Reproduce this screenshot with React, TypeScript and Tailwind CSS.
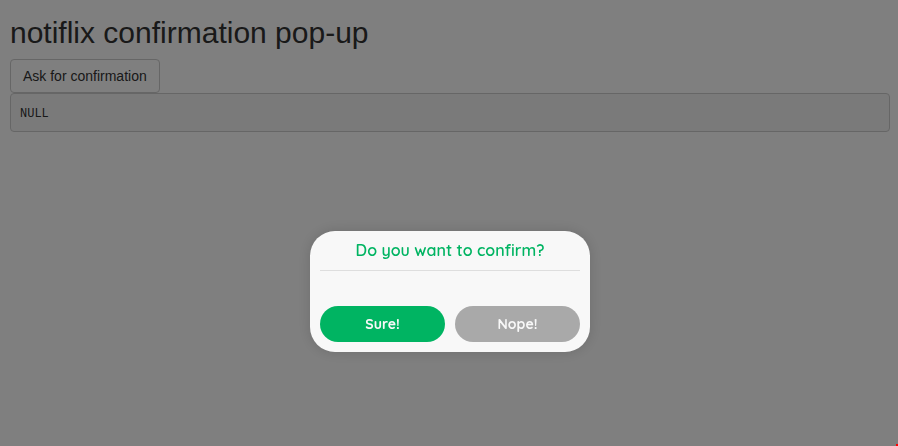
export default function App() {
  return (
    <div className="min-h-screen bg-white font-['Liberation_Sans',Arial,sans-serif] text-[#333]">
      <main className="pt-4 pr-2 pl-[10px]">
        <h2 className="mb-[10px] text-[30px] leading-[33px] font-normal">notiflix confirmation pop-up</h2>
        <button
          type="button"
          className="block h-[34px] rounded border border-[#ccc] bg-white px-3 text-sm leading-5 whitespace-nowrap"
        >
          Ask for confirmation
        </button>
        <pre className="rounded border border-[#ccc] bg-[#f5f5f5] px-[9px] pt-[11px] pb-[7px] font-['Liberation_Mono',monospace] text-xs leading-[19px]">
          NULL
        </pre>
      </main>

      <div className="fixed inset-0 flex items-start justify-center bg-black/50 pt-[231px] pl-[2px]">
        <div
          role="dialog"
          aria-modal="true"
          aria-labelledby="confirm-title"
          className="w-[280px] rounded-[25px] bg-[#f8f8f8] p-[10px] font-[Quicksand,Lato,sans-serif] shadow-[0_0_14px_rgba(0,0,0,0.15)]"
        >
          <h5
            id="confirm-title"
            className="mb-[35px] border-b border-black/10 pb-[10px] text-center text-base leading-[19px] font-semibold text-[#00b462]"
          >
            Do you want to confirm?
          </h5>
          <div className="grid grid-cols-2 gap-[10px] text-sm leading-5 font-bold text-[#f8f8f8]">
            <button type="button" className="h-9 rounded-full bg-[#00b462]">
              Sure!
            </button>
            <button type="button" className="h-9 rounded-full bg-[#a9a9a9]">
              Nope!
            </button>
          </div>
        </div>
        <span className="fixed right-0 bottom-0 size-[2px] bg-[#ff0000]" />
      </div>
    </div>
  );
}
